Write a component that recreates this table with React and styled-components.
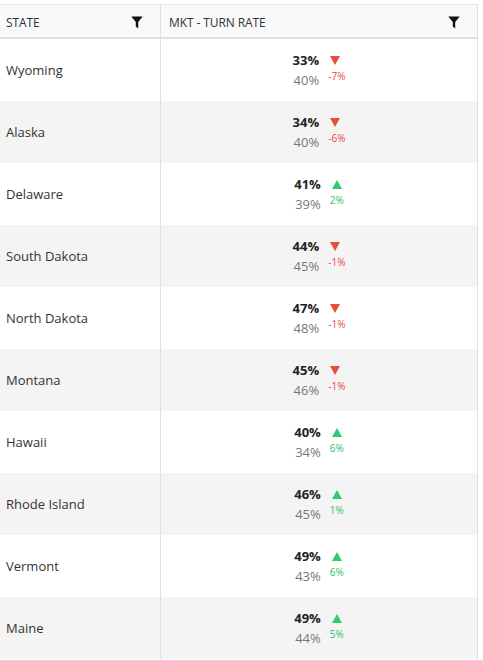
import React from "react";
import styled, { createGlobalStyle } from "styled-components";

const Global = createGlobalStyle`
  html, body { margin: 0; padding: 0; background: #fff; }
  body { font-family: "Open Sans", "Noto Sans", Arial, sans-serif; color: #333; }
`;

const Table = styled.div`
  margin-top: 4px;
  width: 478px;
  border-top: 1px solid #e3e6ea;
  display: grid;
  grid-template-columns: 161px 317px;
`;

const HeadCell = styled.div`
  box-sizing: border-box;
  height: 34px;
  background: #f8f9fa;
  border-bottom: 2px solid #dde1e5;
  border-right: 1px solid #dde1e5;
  display: flex;
  align-items: center;
  justify-content: space-between;
  padding: 2px 17px 0 ${(p) => (p.$second ? "8px" : "6px")};
  font-size: 12px;
  letter-spacing: -0.1px;
  color: #333;
`;

const Cell = styled.div`
  box-sizing: border-box;
  height: 62px;
  background: ${(p) => (p.$odd ? "#f4f4f4" : "#fff")};
  border-right: 1px solid #dde1e5;
  display: flex;
  align-items: center;
  padding-left: ${(p) => (p.$center ? "0" : "6px")};
  font-size: 13px;
  color: #333;
  justify-content: ${(p) => (p.$center ? "center" : "flex-start")};
`;

const Metric = styled.div`
  display: grid;
  grid-template-columns: auto auto;
  column-gap: 9px;
  align-items: start;
  margin-top: 1px;
`;

const Main = styled.span`
  font-weight: 700;
  font-size: 13px;
  color: #222;
  line-height: 19px;
  text-align: right;
`;

const Prev = styled.span`
  font-size: 13px;
  color: #777;
  line-height: 20px;
  text-align: right;
`;

const Arrow = styled.span`
  display: flex;
  align-items: center;
  height: 19px;
  padding-left: 2px;
`;

const Change = styled.span`
  font-size: 10px;
  line-height: 13px;
  color: ${(p) => (p.$up ? "#2fbf6a" : "#e8474f")};
`;

const Funnel = () => (
  <svg width="12" height="13" viewBox="0 0 12 13">
    <path d="M0.3 0.5 H11.7 L7.2 6 V12.5 L4.8 10.6 V6 Z" fill="#111" />
  </svg>
);

const Tri = ({ up }) => (
  <svg width="10" height="9" viewBox="0 0 10 9">
    {up ? (
      <path d="M5 0 L10 9 H0 Z" fill="#2ecc71" />
    ) : (
      <path d="M0 0 H10 L5 9 Z" fill="#e74c3c" />
    )}
  </svg>
);

const rows = [
  ["Wyoming", 33, 40],
  ["Alaska", 34, 40],
  ["Delaware", 41, 39],
  ["South Dakota", 44, 45],
  ["North Dakota", 47, 48],
  ["Montana", 45, 46],
  ["Hawaii", 40, 34],
  ["Rhode Island", 46, 45],
  ["Vermont", 49, 43],
  ["Maine", 49, 44],
];

export default function App() {
  return (
    <>
      <Global />
      <Table>
        <HeadCell>
          STATE
          <Funnel />
        </HeadCell>
        <HeadCell $second>
          MKT - TURN RATE
          <Funnel />
        </HeadCell>
        {rows.map(([name, cur, prev], i) => {
          const diff = cur - prev;
          const up = diff > 0;
          return (
            <React.Fragment key={name}>
              <Cell $odd={i % 2 === 1}>{name}</Cell>
              <Cell $odd={i % 2 === 1} $center>
                <Metric>
                  <Main>{cur}%</Main>
                  <Arrow>
                    <Tri up={up} />
                  </Arrow>
                  <Prev>{prev}%</Prev>
                  <Change $up={up}>{diff}%</Change>
                </Metric>
              </Cell>
            </React.Fragment>
          );
        })}
      </Table>
    </>
  );
}
